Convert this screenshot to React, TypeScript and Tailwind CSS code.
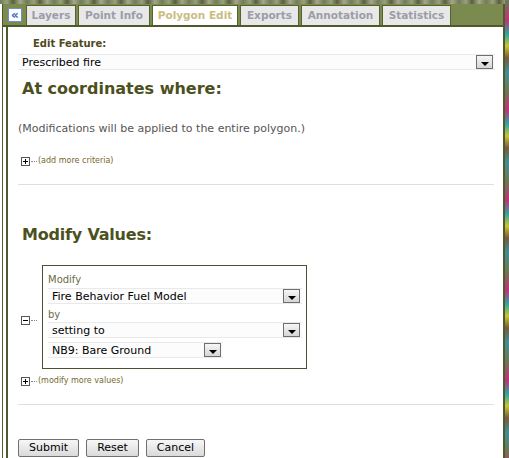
import React from 'react';

const tabs = [
  { label: 'Layers', w: 'w-[50px]' },
  { label: 'Point Info', w: 'w-[72px]' },
  { label: 'Polygon Edit', w: 'w-[86px]', active: true },
  { label: 'Exports', w: 'w-[59px]' },
  { label: 'Annotation', w: 'w-[79px]' },
  { label: 'Statistics', w: 'w-[69px]' },
];

function DropButton() {
  return (
    <div className="w-[17px] h-[14px] border border-[#6e6e6e] bg-gradient-to-b from-[#f6f6f6] to-[#d6d6d6] flex items-end justify-center pb-[2px]">
      <div className="w-0 h-0 border-l-[4px] border-r-[4px] border-t-[4px] border-l-transparent border-r-transparent border-t-black" />
    </div>
  );
}

function Select({ value, className }: { value: string; className: string }) {
  return (
    <div className={`flex items-center justify-between border-y border-[#e9e9e9] bg-[#fcfcfc] pl-1 pr-[2px] text-[11px] text-black ${className}`}>
      <span className="pt-[2px]">{value}</span>
      <DropButton />
    </div>
  );
}

function TreeIcon({ minus }: { minus?: boolean }) {
  return (
    <div className="flex items-center">
      <div className="relative w-[9px] h-[9px] border border-[#555] bg-white">
        <div className="absolute left-[1px] top-[3px] w-[5px] h-[1px] bg-black" />
        {!minus && <div className="absolute left-[3px] top-[1px] w-[1px] h-[5px] bg-black" />}
      </div>
      <span className="ml-[1px] w-[6px] border-t border-dotted border-[#888]" />
    </div>
  );
}

function Button({ label, w }: { label: string; w: string }) {
  return (
    <div className={`${w} h-[18px] flex items-center justify-center rounded-[2px] border border-[#707070] bg-gradient-to-b from-[#f7f7f7] to-[#dadada] text-[11px] text-black`}>
      {label}
    </div>
  );
}

export default function App() {
  return (
    <div className="relative w-[509px] h-[458px] overflow-hidden bg-white font-['DejaVu_Sans',Verdana,sans-serif]">
      {/* map strips */}
      <div className="h-[4px] w-full bg-[repeating-linear-gradient(90deg,#6f7d58_0px,#9aa07a_7px,#58603e_13px,#a7a68a_20px,#6f7d58_27px)]" />
      <div className="absolute right-0 top-0 w-[4px] h-full bg-[repeating-linear-gradient(180deg,#6b7a55_0px,#c2307b_20px,#2ea5a3_34px,#c9c536_46px,#7a5a3a_58px,#3e8f9a_72px,#6b7a55_90px)]" />

      <div className="ml-[2px] w-[503px] h-[454px] flex flex-col border-l border-r-2 border-[#4d5a2b]">
        {/* tab bar */}
        <div className="h-[23px] bg-[#7b8a4e] border-b-2 border-[#4d5a2b] flex items-end pl-[5px]">
          <div className="mb-[3px] mr-[4px] w-[14px] h-[14px] border border-[#6f8fd0] bg-white flex items-center justify-center text-[12px] font-bold leading-none text-[#3a64c0]">
            «
          </div>
          <div className="flex gap-[2px] font-bold text-[10.5px]">
            {tabs.map((t) => (
              <div
                key={t.label}
                className={`${t.w} h-[20px] flex items-center justify-center border border-b-0 border-[#56632f] ${
                  t.active ? 'bg-white text-[#cabd82]' : 'bg-[#e8e8e8] text-[#9c9ca8]'
                }`}
              >
                {t.label}
              </div>
            ))}
          </div>
        </div>

        {/* content */}
        <div className="flex-1 ml-[3px] border-l-2 border-[#4d5a2b] bg-white pl-[10px] pr-[8px]">
          <div className="pl-[15px] pt-[10px] text-[10px] font-bold text-[#4f4a1c] leading-[14px]">Edit Feature:</div>
          <Select value="Prescribed fire" className="mt-[3px] h-[16px] w-[477px]" />
          <div className="pl-[4px] mt-[8px] text-[16px] font-bold text-[#4c5020] leading-[22px]">At coordinates where:</div>
          <div className="mt-[22px] text-[11px] text-[#555] leading-[14px]">(Modifications will be applied to the entire polygon.)</div>
          <div className="mt-[20px] pl-[3px] flex items-center h-[10px]">
            <TreeIcon />
            <span className="ml-[1px] text-[8px] text-[#75682e]">(add more criteria)</span>
          </div>
          <div className="mt-[18px] h-px w-[476px] bg-[#dedede]" />

          <div className="pl-[4px] mt-[39px] text-[16px] font-bold text-[#4c5020] leading-[22px] tracking-[-0.2px]">Modify Values:</div>

          <div className="mt-[19px] flex items-center">
            <div className="w-[24px] pl-[3px] pt-[6px]">
              <TreeIcon minus />
            </div>
            <div className="w-[265px] h-[104px] border border-[#4d5030] px-[5px] pt-[7px]">
              <div className="text-[10px] text-[#6b6b48] leading-[14px]">Modify</div>
              <Select value="Fire Behavior Fuel Model" className="mt-[1px] h-[16px] w-[254px]" />
              <div className="mt-[4px] text-[10px] text-[#6b6b48] leading-[14px]">by</div>
              <Select value="setting to" className="mt-[0px] h-[16px] w-[254px]" />
              <Select value="NB9: Bare Ground" className="mt-[4px] h-[16px] w-[175px]" />
            </div>
          </div>

          <div className="mt-[7px] pl-[3px] flex items-center h-[10px]">
            <TreeIcon />
            <span className="ml-[1px] text-[8px] text-[#75682e]">(modify more values)</span>
          </div>
          <div className="mt-[18px] h-px w-[476px] bg-[#dedede]" />

          <div className="mt-[34px] flex gap-[7px]">
            <Button label="Submit" w="w-[61px]" />
            <Button label="Reset" w="w-[53px]" />
            <Button label="Cancel" w="w-[59px]" />
          </div>
        </div>
      </div>
    </div>
  );
}
